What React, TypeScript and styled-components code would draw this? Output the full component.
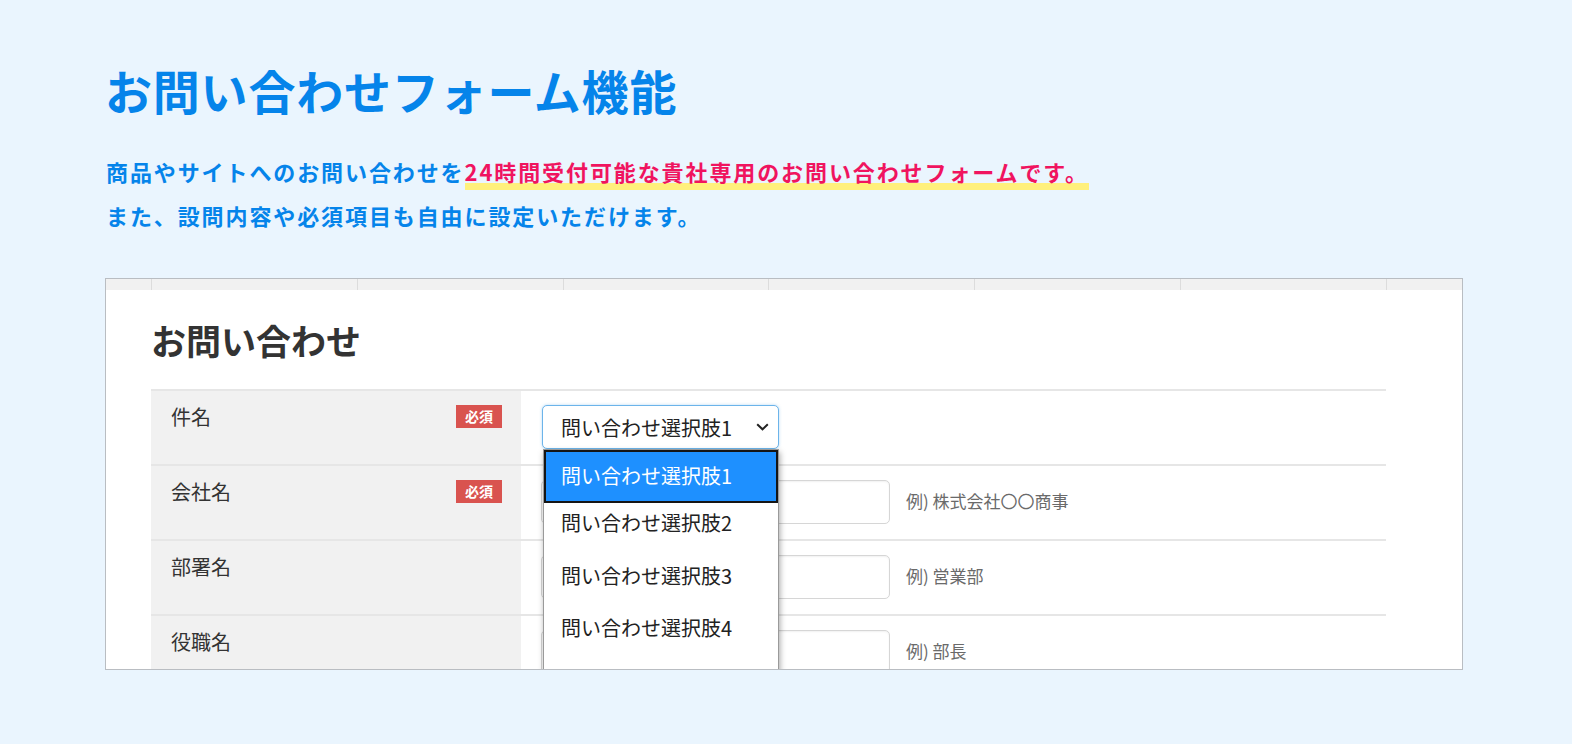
import React from "react";
import styled, { createGlobalStyle } from "styled-components";

const GlobalStyle = createGlobalStyle`
  html, body { margin: 0; padding: 0; }
  body {
    background: #eaf5fe;
    font-family: "Noto Sans CJK JP", "Noto Sans", sans-serif;
  }
`;

const Page = styled.main`
  box-sizing: border-box;
  min-height: 744px;
  padding: 57px 0 0 105px;
`;

const Title = styled.h1`
  margin: 0;
  font-size: 47px;
  line-height: 66px;
  font-weight: 700;
  letter-spacing: 0.8px;
  color: #0584ea;
`;

const Lead = styled.p`
  margin: 26px 0 0 1px;
  font-size: 22px;
  line-height: 44px;
  font-weight: 700;
  letter-spacing: 1.9px;
  color: #0584ea;
`;

const Marker = styled.span`
  color: #f0145f;
  padding-bottom: 3px;
  background: linear-gradient(transparent 81%, #fff07c 81%);
`;

const Panel = styled.section`
  box-sizing: border-box;
  margin-top: 41px;
  width: 1358px;
  height: 392px;
  border: 1px solid #b9bdc2;
  background: #fff;
  overflow: hidden;
`;

const Strip = styled.div`
  display: flex;
  height: 11px;
  padding-left: 45px;
  background: #f1f1f1;
`;

const StripCols = styled.div`
  display: grid;
  grid-template-columns: repeat(6, 1fr);
  width: 1235px;
  border-right: 1px solid #dcdcdc;
`;

const StripCol = styled.div`
  border-left: 1px solid #dcdcdc;
`;

const FormBody = styled.div`
  padding: 24px 0 0 45px;
`;

const FormHeading = styled.h2`
  margin: 0;
  font-size: 35px;
  line-height: 52px;
  font-weight: 700;
  color: #333;
`;

const Table = styled.div`
  margin-top: 23px;
  width: 1235px;
  border-top: 2px solid #e6e6e6;
`;

const Row = styled.div`
  display: grid;
  grid-template-columns: 370px 1fr;
  border-bottom: 2px solid #e6e6e6;
`;

const LabelCell = styled.div`
  display: flex;
  justify-content: space-between;
  align-items: flex-start;
  padding: 14px 19px 0 20px;
  background: #f1f1f1;
`;

const LabelText = styled.span`
  font-size: 20px;
  line-height: 24px;
  color: #333;
`;

const Badge = styled.span`
  padding: 0 9px;
  background: #d9534f;
  color: #fff;
  font-size: 14px;
  line-height: 23px;
  font-weight: 700;
`;

const FieldCell = styled.div`
  position: relative;
  display: flex;
  align-items: center;
  padding: 14px 20px 15px;
`;

const TextInput = styled.input`
  box-sizing: border-box;
  width: 349px;
  height: 44px;
  border: 1px solid #d6d6d6;
  border-radius: 5px;
  background: #fff;
  box-shadow: inset 0 1px 2px rgba(0, 0, 0, 0.06);
`;

const Hint = styled.span`
  margin: -3px 0 0 16px;
  font-size: 17px;
  color: #6a6a6a;
`;

const SelectWrap = styled.div`
  position: relative;
  width: 237px;
  margin-left: 1px;
`;

const SelectBox = styled.div`
  box-sizing: border-box;
  display: flex;
  align-items: center;
  justify-content: space-between;
  height: 44px;
  padding: 0 9px 0 18px;
  border: 1px solid #6cb4ea;
  border-radius: 5px;
  background: #fff;
  box-shadow: 0 0 3px rgba(102, 175, 233, 0.5);
  font-size: 20px;
  color: #222;
`;

const OptionList = styled.ul`
  position: absolute;
  top: 100%;
  left: 1px;
  right: 0;
  z-index: 5;
  margin: 0;
  padding: 0;
  list-style: none;
  background: #fff;
  border: 1px solid #9a9a9a;
  box-shadow: 1px 3px 6px rgba(0, 0, 0, 0.35);
`;

const Option = styled.li<{ $active?: boolean }>`
  padding: ${(p) => (p.$active ? "13px 17px 13.5px" : "7.5px 17px 19px")};
  font-size: 20px;
  line-height: 26px;
  color: ${(p) => (p.$active ? "#fff" : "#222")};
  background: ${(p) => (p.$active ? "#1e90ff" : "#fff")};
  box-shadow: ${(p) => (p.$active ? "inset 0 0 0 2px #151515" : "none")};
`;

const Chevron = () => (
  <svg width="13" height="8" viewBox="0 0 13 8" aria-hidden="true">
    <path d="M1.2 1.2 L6.5 6.3 L11.8 1.2" fill="none" stroke="#222" strokeWidth="2" />
  </svg>
);

type Field = { label: string; required?: boolean; hint?: string; select?: boolean };

const fields: Field[] = [
  { label: "件名", required: true, select: true },
  { label: "会社名", required: true, hint: "例) 株式会社〇〇商事" },
  { label: "部署名", hint: "例) 営業部" },
  { label: "役職名", hint: "例) 部長" },
];

const options = ["問い合わせ選択肢1", "問い合わせ選択肢2", "問い合わせ選択肢3", "問い合わせ選択肢4", "問い合わせ選択肢5"];

export default function App() {
  return (
    <>
      <GlobalStyle />
      <Page>
        <Title>お問い合わせフォーム機能</Title>
        <Lead>
          商品やサイトへのお問い合わせを<Marker>24時間受付可能な貴社専用のお問い合わせフォームです。</Marker>
          <br />
          また、設問内容や必須項目も自由に設定いただけます。
        </Lead>
        <Panel>
          <Strip>
            <StripCols>
              {Array.from({ length: 6 }).map((_, i) => (
                <StripCol key={i} />
              ))}
            </StripCols>
          </Strip>
          <FormBody>
            <FormHeading>お問い合わせ</FormHeading>
            <Table>
              {fields.map((f) => (
                <Row key={f.label}>
                  <LabelCell>
                    <LabelText>{f.label}</LabelText>
                    {f.required && <Badge>必須</Badge>}
                  </LabelCell>
                  <FieldCell>
                    {f.select ? (
                      <SelectWrap>
                        <SelectBox>
                          <span>問い合わせ選択肢1</span>
                          <Chevron />
                        </SelectBox>
                        <OptionList>
                          {options.map((o, i) => (
                            <Option key={o} $active={i === 0}>
                              {o}
                            </Option>
                          ))}
                        </OptionList>
                      </SelectWrap>
                    ) : (
                      <>
                        <TextInput type="text" />
                        <Hint>{f.hint}</Hint>
                      </>
                    )}
                  </FieldCell>
                </Row>
              ))}
            </Table>
          </FormBody>
        </Panel>
      </Page>
    </>
  );
}
